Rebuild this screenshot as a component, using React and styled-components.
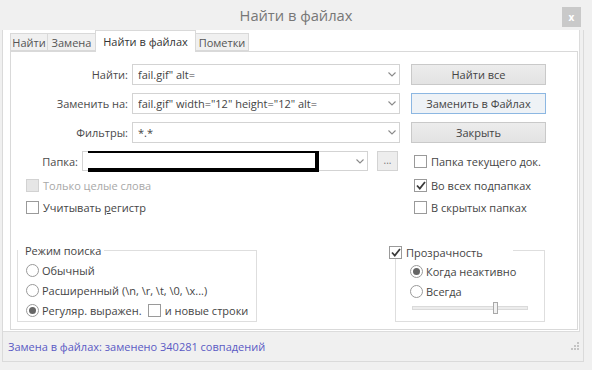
import React from 'react'
import styled, { createGlobalStyle } from 'styled-components'

const Global = createGlobalStyle`
  html, body { margin: 0; padding: 0; background: #f0f0f0; }
  body { font-family: "Open Sans", "Noto Sans", sans-serif; font-size: 11px; color: #454545; }
  * { box-sizing: border-box; }
`

const Window = styled.div`
  width: 592px;
  height: 370px;
  display: flex;
  flex-direction: column;
  padding: 0 8px 8px 2px;
  background: #f0f0f0;
`

const TitleBar = styled.div`
  height: 30px;
  margin: 0 -8px 0 -2px;
  padding: 0 11px 0 30px;
  display: flex;
  align-items: center;
`

const Title = styled.div`
  flex: 1;
  text-align: center;
  font-size: 14.7px;
  color: #777;
`

const CloseBtn = styled.div`
  width: 19px;
  height: 20px;
  margin-top: 4px;
  background: #c9c9c9;
  color: #fff;
  font-size: 10px;
  font-weight: bold;
  display: flex;
  align-items: center;
  justify-content: center;
`

const Client = styled.div`
  flex: 1;
  display: flex;
  flex-direction: column;
  border: 1px solid #dadada;
  border-top: none;
`

const TabArea = styled.div`
  height: 302px;
  background: #fff;
  border-right: 1px solid #dcdcdc;
  border-bottom: 1px solid #dcdcdc;
  margin-right: 3px;
  padding: 1px 1px 1px 7px;
  display: flex;
  flex-direction: column;
`

const TabStrip = styled.div`
  height: 20px;
  display: flex;
  align-items: flex-end;
  padding-left: 1px;
`

const Tab = styled.div`
  width: ${p => p.$w}px;
  height: ${p => (p.$active ? 22 : 18)}px;
  margin-left: -1px;
  margin-bottom: ${p => (p.$active ? -1 : 0)}px;
  border: 1px solid #d9d9d9;
  border-bottom: ${p => (p.$active ? 'none' : '1px solid #d9d9d9')};
  background: ${p => (p.$active ? '#fff' : '#f0f0f0')};
  position: relative;
  z-index: ${p => (p.$active ? 1 : 0)};
  display: flex;
  align-items: ${p => (p.$active ? 'flex-start' : 'center')};
  padding-top: ${p => (p.$active ? 3 : 0)}px;
  justify-content: center;
  color: ${p => (p.$active ? '#333' : '#555')};
  white-space: nowrap;
`

const TabPage = styled.div`
  flex: 1;
  border: 1px solid #d9d9d9;
  padding-top: 12px;
  display: flex;
  flex-direction: column;
`

const Fields = styled.div`
  display: flex;
  flex-direction: column;
  gap: 8px;
`

const Row = styled.div`
  display: flex;
  align-items: center;
  height: ${p => p.$h || 21}px;
`

const LeftPart = styled.div`
  width: 400px;
  display: flex;
  align-items: center;
  padding-left: ${p => p.$pl || 0}px;
`

const RightPart = styled.div`
  width: 135px;
  display: flex;
  align-items: center;
  padding-left: ${p => p.$pl || 0}px;
`

const Label = styled.div`
  width: ${p => p.$w}px;
  text-align: right;
  margin-right: 4px;
  white-space: nowrap;
  color: #4a4a4a;
`

const Combo = styled.div`
  width: ${p => p.$w}px;
  height: ${p => p.$h || 21}px;
  border: 1px solid #d3d3d3;
  background: #fff;
  display: flex;
  align-items: center;
  padding: 0 3px 0 5px;
  white-space: nowrap;
  color: #444;
`

const ComboText = styled.div`
  flex: 1;
  overflow: hidden;
  display: flex;
  align-items: center;
`

const Redact = styled.div`
  width: 235px;
  height: 23px;
  margin: -2px 0 0 -4px;
  border: 4px solid #000;
  background: #fff;
`

const Arrow = () => (
  <svg width="8" height="5" viewBox="0 0 8 5">
    <polyline points="0.5,0.5 4,4 7.5,0.5" fill="none" stroke="#8a8a8a" strokeWidth="1.1" />
  </svg>
)

const Button = styled.div`
  width: 135px;
  height: 21px;
  border: 1px solid ${p => (p.$focus ? '#8cb7e2' : '#c9c9c9')};
  background: ${p => (p.$focus ? '#eef2f6' : 'linear-gradient(#ececec, #e3e3e3)')};
  display: flex;
  align-items: center;
  justify-content: center;
  color: #444;
`

const DotsBtn = styled.div`
  width: 21px;
  height: 20px;
  margin-left: 9px;
  border: 1px solid #d3d3d3;
  background: #ededed;
  color: #777;
  font-size: 10px;
  display: flex;
  align-items: center;
  justify-content: center;
  padding-bottom: 3px;
`

const Checks = styled.div`
  margin-top: 3px;
  display: flex;
  flex-direction: column;
`

const Item = styled.div`
  display: flex;
  align-items: center;
  white-space: nowrap;
  color: ${p => (p.$disabled ? '#a8a8a8' : '#454545')};
`

const Box = styled.span`
  width: 13px;
  height: 13px;
  margin-right: 4px;
  border: 1px solid ${p => (p.$disabled ? '#d2d2d2' : '#9a9a9a')};
  background: ${p => (p.$disabled ? '#e6e6e6' : '#fff')};
  display: flex;
  align-items: center;
  justify-content: center;
  flex-shrink: 0;
`

const Radio = styled.span`
  width: 13px;
  height: 13px;
  margin-right: 3px;
  border: 1px solid #9a9a9a;
  border-radius: 50%;
  background: #fff;
  display: flex;
  align-items: center;
  justify-content: center;
  flex-shrink: 0;
  &::after {
    content: '';
    display: ${p => (p.$on ? 'block' : 'none')};
    width: 7px;
    height: 7px;
    border-radius: 50%;
    background: #666;
  }
`

const Tick = () => (
  <svg width="10" height="9" viewBox="0 0 10 9">
    <polyline points="1,4.5 3.8,7.5 9,1" fill="none" stroke="#3a3a3a" strokeWidth="1.8" />
  </svg>
)

const Check = ({ on, disabled, children }) => (
  <Item $disabled={disabled}>
    <Box $disabled={disabled}>{on && <Tick />}</Box>
    <span>{children}</span>
  </Item>
)

const RadioItem = ({ on, children }) => (
  <Item>
    <Radio $on={on} />
    <span>{children}</span>
  </Item>
)

const Key = styled.span`
  text-decoration: underline;
`

const Groups = styled.div`
  margin-top: 32px;
  display: flex;
  align-items: flex-start;
`

const Frame = styled.div`
  width: ${p => p.$w}px;
  height: 72px;
  margin-left: ${p => p.$ml}px;
  border: 1px solid #dedede;
  display: flex;
  flex-direction: column;
  padding-left: ${p => p.$pl}px;
`

const Legend = styled.div`
  align-self: flex-start;
  height: 14px;
  margin: ${p => p.$mt}px 0 0 ${p => p.$ml}px;
  padding: 0 ${p => p.$pr}px 0 ${p => p.$pli || 0}px;
  background: #fff;
  display: flex;
  align-items: center;
  white-space: nowrap;
`

const Options = styled.div`
  margin-top: ${p => p.$mt}px;
  display: flex;
  flex-direction: column;
`

const OptRow = styled.div`
  height: 20px;
  display: flex;
  align-items: center;
  gap: ${p => p.$gap || 0}px;
`

const Track = styled.div`
  width: 116px;
  height: 4px;
  margin: 5px 0 0 2px;
  border: 1px solid #dadada;
  background: #ececec;
  display: flex;
  align-items: center;
`

const Thumb = styled.div`
  width: 5px;
  height: 12px;
  margin-left: 80px;
  border: 1px solid #a9a9a9;
  background: #f2f2f2;
  flex-shrink: 0;
`

const StatusBar = styled.div`
  flex: 1;
  display: flex;
  align-items: center;
  justify-content: space-between;
  padding: 0 3px 0 5px;
  color: #5a5ac4;
`

const Grip = () => (
  <svg width="9" height="9" viewBox="0 0 9 9">
    {[[6, 0], [3, 3], [6, 3], [0, 6], [3, 6], [6, 6]].map(([x, y]) => (
      <rect key={x + '-' + y} x={x} y={y} width="2" height="2" fill="#c4c4c4" />
    ))}
  </svg>
)

const fields = [
  { label: 'Найти:', value: 'fail.gif" alt=', btn: 'Найти все' },
  { label: 'Заменить на:', value: 'fail.gif" width="12" height="12" alt=', btn: 'Заменить в Файлах', focus: true },
  { label: 'Фильтры:', value: '*.*', btn: 'Закрыть' },
]

export default function App() {
  return (
    <Window>
      <Global />
      <TitleBar>
        <Title>Найти в файлах</Title>
        <CloseBtn>x</CloseBtn>
      </TitleBar>
      <Client>
        <TabArea>
          <TabStrip>
            <Tab $w={38}>Найти</Tab>
            <Tab $w={49}>Замена</Tab>
            <Tab $w={101} $active>Найти в файлах</Tab>
            <Tab $w={54}>Пометки</Tab>
          </TabStrip>
          <TabPage>
            <Fields>
              {fields.map(f => (
                <Row key={f.label}>
                  <LeftPart>
                    <Label $w={117}>{f.label}</Label>
                    <Combo $w={268}>
                      <ComboText>{f.value}</ComboText>
                      <Arrow />
                    </Combo>
                  </LeftPart>
                  <RightPart>
                    <Button $focus={f.focus}>{f.btn}</Button>
                  </RightPart>
                </Row>
              ))}
              <Row $h={20}>
                <LeftPart>
                  <Label $w={67}>Папка:</Label>
                  <Combo $w={286} $h={20}>
                    <ComboText>
                      <Redact />
                    </ComboText>
                    <Arrow />
                  </Combo>
                  <DotsBtn>...</DotsBtn>
                </LeftPart>
                <RightPart $pl={3}>
                  <Check>Папка текущего док.</Check>
                </RightPart>
              </Row>
            </Fields>
            <Checks>
              <Row $h={22}>
                <LeftPart $pl={15}>
                  <Check disabled>Только целые слова</Check>
                </LeftPart>
                <RightPart $pl={3}>
                  <Check on>Во всех подпапках</Check>
                </RightPart>
              </Row>
              <Row $h={22}>
                <LeftPart $pl={15}>
                  <Check>Учитывать <Key>р</Key>егистр</Check>
                </LeftPart>
                <RightPart $pl={3}>
                  <Check>В скрытых папках</Check>
                </RightPart>
              </Row>
            </Checks>
            <Groups>
              <Frame $w={240} $ml={6} $pl={8}>
                <Legend $mt={-8} $ml={-8} $pli={7} $pr={3}>Режим поиска</Legend>
                <Options $mt={3}>
                  <OptRow><RadioItem>Обычный</RadioItem></OptRow>
                  <OptRow><RadioItem>Расширенный (\n, \r, \t, \0, \x...)</RadioItem></OptRow>
                  <OptRow $gap={6}>
                    <RadioItem on>Регуляр. выражен.</RadioItem>
                    <Check>и новые строки</Check>
                  </OptRow>
                </Options>
              </Frame>
              <Frame $w={150} $ml={138} $pl={14}>
                <Legend $mt={-6} $ml={-21} $pr={30}>
                  <Check on>Прозрачность</Check>
                </Legend>
                <Options $mt={2}>
                  <OptRow><RadioItem on>Когда неактивно</RadioItem></OptRow>
                  <OptRow><RadioItem>Всегда</RadioItem></OptRow>
                  <Track><Thumb /></Track>
                </Options>
              </Frame>
            </Groups>
          </TabPage>
        </TabArea>
        <StatusBar>
          <span>Замена в файлах: заменено 340281 совпадений</span>
          <Grip />
        </StatusBar>
      </Client>
    </Window>
  )
}
